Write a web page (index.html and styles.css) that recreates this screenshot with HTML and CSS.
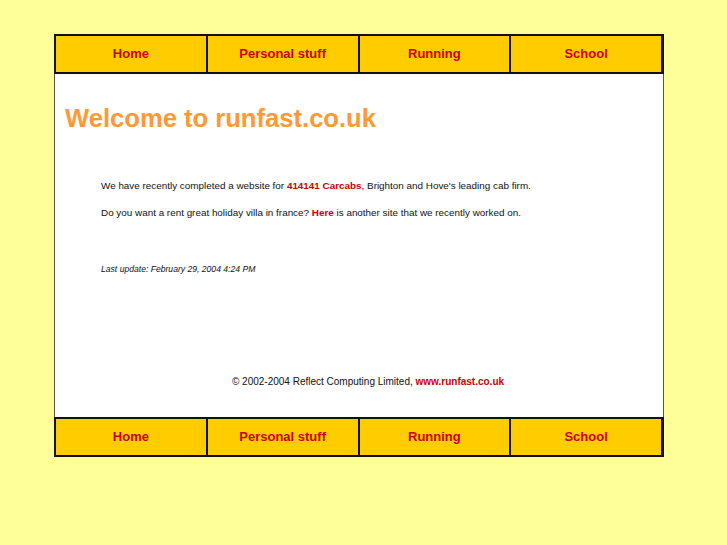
FILE: index.html
```html
<!DOCTYPE html>
<html>
<head>
<meta charset="utf-8">
<link rel="stylesheet" href="styles.css">
</head>
<body>
<div class="page">
  <nav class="nav">
    <a class="cell" href="#">Home</a>
    <a class="cell" href="#">Personal stuff</a>
    <a class="cell" href="#">Running</a>
    <a class="cell" href="#">School</a>
  </nav>
  <main class="content">
    <h1 class="title">Welcome to runfast.co.uk</h1>
    <div class="body">
      <p class="para">We have recently completed a website for <a class="link" href="#">414141 Carcabs</a>, Brighton and Hove's leading cab firm.</p>
      <p class="para">Do you want a rent great holiday villa in france? <a class="link" href="#">Here</a> is another site that we recently worked on.</p>
      <p class="update">Last update: February 29, 2004 4:24 PM</p>
    </div>
    <p class="footer">© 2002-2004 Reflect Computing Limited, <a class="link" href="#">www.runfast.co.uk</a></p>
  </main>
  <nav class="nav">
    <a class="cell" href="#">Home</a>
    <a class="cell" href="#">Personal stuff</a>
    <a class="cell" href="#">Running</a>
    <a class="cell" href="#">School</a>
  </nav>
</div>
</body>
</html>
```
FILE: styles.css
```css
html, body {
  margin: 0;
  padding: 0;
  background: #ffff99;
}
body {
  font-family: "Liberation Sans", Arial, sans-serif;
  padding: 34px 0 0 54px;
}
.page {
  width: 610px;
}
.nav {
  display: grid;
  grid-template-columns: repeat(4, 1fr);
  gap: 2px;
  background: #111;
  border: 2px solid #111;
  border-right-width: 3px;
  height: 36px;
}
.cell {
  background: #ffcc00;
  color: #cc0000;
  font-weight: bold;
  font-size: 13px;
  text-decoration: none;
  display: flex;
  align-items: center;
  justify-content: center;
  padding-bottom: 2px;
}
.content {
  background: #fff;
  border-left: 1px solid #555;
  border-right: 1px solid #555;
  height: 343px;
  display: flex;
  flex-direction: column;
}
.title {
  margin: 29px 0 0 10px;
  color: #ff9933;
  font-size: 25.6px;
  font-weight: bold;
  line-height: 30px;
}
.body {
  padding: 0 0 0 46px;
  margin-top: 46px;
}
.para {
  margin: 0 0 14px 0;
  font-size: 9.9px;
  line-height: 13px;
  color: #111;
}
.link {
  color: #cc0000;
  font-weight: bold;
  text-decoration: none;
}
.update {
  margin: 44px 0 0 0;
  font-size: 8.6px;
  font-style: italic;
  color: #111;
  line-height: 12px;
}
.footer {
  margin: auto 0 29px 0;
  padding-left: 18px;
  text-align: center;
  font-size: 10px;
  line-height: 13px;
  color: #111;
}
```
